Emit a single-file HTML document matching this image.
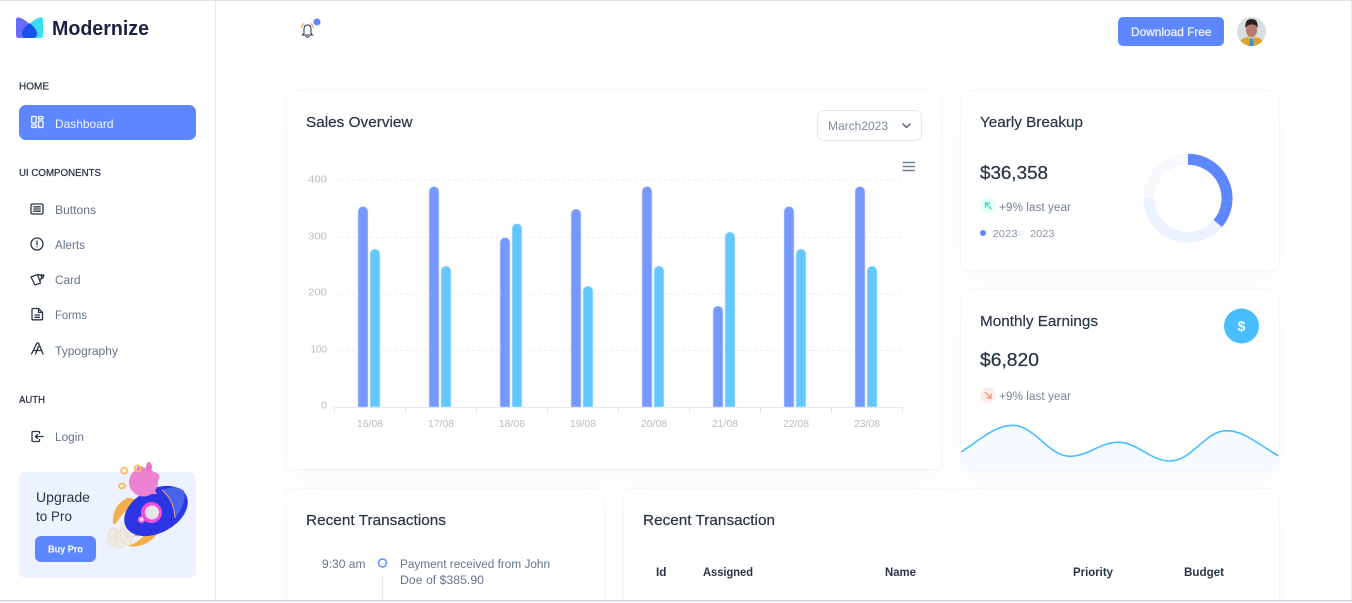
<!DOCTYPE html>
<html><head><meta charset="utf-8"><title>Modernize</title>
<style>
html,body{margin:0;padding:0;width:1352px;height:603px;overflow:hidden;background:#fff}
#w{position:absolute;left:0;top:0;width:1352px;height:603px;overflow:hidden;background:#fff}
.c{position:absolute;background:#fff;border-radius:7px;box-shadow:0 0 2px rgba(145,158,171,.16),0 12px 24px -4px rgba(145,158,171,.08)}
svg{position:absolute;left:0;top:0}
text{font-family:"Liberation Sans",sans-serif}
.h{font-size:15px;fill:#2A3547;stroke:#2A3547;stroke-width:.2px}
.n{font-size:11.5px;fill:#66748C}
.s{font-size:10.5px;fill:#2A3547;stroke:#2A3547;stroke-width:.25px}
.a{font-size:10px;fill:#BABCC6}
.t{font-size:11.500px;font-weight:700;fill:#2A3547}
.i{fill:none;stroke:#2A3547;stroke-width:1.3;stroke-linecap:round;stroke-linejoin:round}
.g{stroke:#ECEEF1;stroke-width:1;stroke-dasharray:3 3}
.b{fill:#7699FF;stroke:#D6E0FF;stroke-width:.6}
.y{fill:#63C8FF;stroke:#D8F0FF;stroke-width:.6}
</style></head><body>
<div id="w">
<div class="c" style="left:287px;top:91px;width:654px;height:378px"></div>
<div class="c" style="left:961px;top:91px;width:318px;height:179px"></div>
<div class="c" style="left:961px;top:290px;width:318px;height:180px"></div>
<div class="c" style="left:287px;top:489px;width:317px;height:130px"></div>
<div class="c" style="left:624px;top:489px;width:655px;height:130px"></div>
<svg width="1352" height="603" viewBox="0 0 1352 603" xmlns="http://www.w3.org/2000/svg">
<!-- frame -->
<rect x="0" y="0" width="1352" height="1" fill="#E4E4E4"/>
<rect x="215" y="1" width="1" height="599" fill="#E8E8EC"/>
<rect x="1351" y="1" width="1" height="599" fill="#EDEDED"/>

<!-- logo -->
<path d="M16 20Q16 17 19 17.500Q28 20 32 29L27 38H19Q16 38 16 35Z" fill="#6B6BFF"/>
<path d="M43 19.500Q43 17 40 17.500Q33 19 28.500 26L33 38H40Q43 38 43 35Z" fill="#3BDDEF"/>
<path d="M29.500 23Q22 29 22 33.500Q22 38 26 38H33Q37 38 37 33.500Q37 29 29.500 23Z" fill="#1A50EC"/>
<text x="52" y="35" font-size="20" font-weight="700" fill="#1B2140" textLength="97" lengthAdjust="spacingAndGlyphs">Modernize</text>

<!-- nav -->
<text class="s" x="19" y="89.500" textLength="30" lengthAdjust="spacingAndGlyphs">HOME</text>
<rect x="19" y="105" width="177" height="35" rx="7" fill="#5D87FF"/>
<g fill="none" stroke="#fff" stroke-width="1.300" stroke-linejoin="round">
<rect x="31.700" y="116.500" width="4.500" height="6.500" rx=".8"/><rect x="31.700" y="125" width="4.500" height="2.500" rx=".8"/>
<rect x="38.500" y="116.500" width="4.500" height="2.500" rx=".8"/><rect x="38.500" y="121" width="4.500" height="6.500" rx=".8"/>
</g>
<text x="55" y="128" font-size="12" fill="#F2F5FF" textLength="58.500" lengthAdjust="spacingAndGlyphs">Dashboard</text>
<text class="s" x="19" y="176" textLength="82" lengthAdjust="spacingAndGlyphs">UI COMPONENTS</text>

<path class="i" d="M32.500 204H41.500Q43 204 43 205.500V212.500Q43 214 41.500 214H32.500Q31 214 31 212.500V205.500Q31 204 32.500 204ZM33.800 206.800H40.200M33.800 209H40.200M33.800 211.200H40.200"/>
<text class="n" x="55" y="214" textLength="41" lengthAdjust="spacingAndGlyphs">Buttons</text>
<circle class="i" cx="37" cy="244" r="6"/><path class="i" d="M37 241V244.500M37 246.800V246.900"/>
<text class="n" x="55" y="249" textLength="30" lengthAdjust="spacingAndGlyphs">Alerts</text>
<path class="i" d="M31 277L37.500 274.500L40.500 283L35 285ZM38.500 274.500L42 276L40.500 280M41.500 274.500L44 275.500L42.500 278.500"/>
<text class="n" x="55" y="284" textLength="25.500" lengthAdjust="spacingAndGlyphs">Card</text>
<path class="i" d="M33 308.500H38.500L42.500 312.500V319Q42.500 319.800 41.500 319.800H33Q32 319.800 32 319V309.500Q32 308.500 33 308.500ZM38.500 308.500V312.500H42.500M35 315H39.500M35 317.300H39.500"/>
<text class="n" x="55" y="319" textLength="32" lengthAdjust="spacingAndGlyphs">Forms</text>
<path class="i" d="M31.500 354L37 343H38.500L43 354M33.500 350.500H41M35.500 354L38.500 346.500"/>
<text class="n" x="55" y="355" textLength="63" lengthAdjust="spacingAndGlyphs">Typography</text>
<text class="s" x="19" y="403" textLength="26" lengthAdjust="spacingAndGlyphs">AUTH</text>
<path class="i" d="M39.500 433.500V432.500Q39.500 431.500 38.500 431.500H33Q32 431.500 32 432.500V440.500Q32 441.500 33 441.500H38.500Q39.500 441.500 39.500 440.500V439.500M43 436.500H35.500M37.500 434.500L35.500 436.500L37.500 438.500"/>
<text class="n" x="55" y="441" textLength="29" lengthAdjust="spacingAndGlyphs">Login</text>

<!-- upgrade -->
<rect x="19" y="472" width="177" height="106" rx="7" fill="#ECF2FF"/>
<text x="36" y="502" font-size="13.500" fill="#2A3547" textLength="54" lengthAdjust="spacingAndGlyphs">Upgrade</text>
<text x="36" y="521" font-size="13.500" fill="#2A3547" textLength="36" lengthAdjust="spacingAndGlyphs">to Pro</text>
<rect x="35" y="536" width="61" height="26" rx="6" fill="#5D87FF"/>
<text x="48" y="552.500" font-size="10.500" font-weight="700" fill="#fff" textLength="35" lengthAdjust="spacingAndGlyphs">Buy Pro</text>
<!-- rocket -->
<g>
<path d="M113 523Q112 506 127 498Q135 497 138 503Q124 510 117 522Q114 526 113 523Z" fill="#F5AE4C"/>
<path d="M128 546Q146 549 159 532L150 529Q140 542 128 546Z" fill="#F5AE4C"/>
<path d="M127 538Q140 535 158 532L147 522L129 520Z" fill="#F29A2E"/>
<g fill="#EFEADF" stroke="#DDD8CC" stroke-width=".5">
<circle cx="112" cy="541" r="5.500"/><circle cx="120" cy="543" r="5"/><circle cx="113" cy="533" r="5"/><circle cx="122" cy="535" r="5.500"/><circle cx="128" cy="541" r="4.500"/><circle cx="125" cy="526" r="5"/><circle cx="131" cy="532" r="5"/><circle cx="129" cy="520" r="4"/>
</g>
<ellipse cx="156" cy="511" rx="34" ry="22" fill="#2C35E4" transform="rotate(-28 156 511)"/>
<path d="M162 490Q176 484 184 491Q187 503 175 518Q173 500 162 490Z" fill="#4A63EE"/>
<path d="M162 490Q174 500 175 518" fill="none" stroke="#F0A84A" stroke-width="1"/>
<circle cx="151.500" cy="512.500" r="10.500" fill="#F14FD9"/><circle cx="152" cy="512.500" r="7" fill="#E8E5E5"/>
<circle cx="141.500" cy="519.500" r="3.800" fill="#F14FD9"/><circle cx="141.500" cy="519.500" r="2" fill="#E8E5E5"/>
<circle cx="143.500" cy="482" r="14.500" fill="#EE82D2"/>
<ellipse cx="153" cy="477" rx="6.500" ry="5" fill="#EE82D2"/>
<ellipse cx="149" cy="467" rx="3" ry="5" fill="#EA74CB"/>
<ellipse cx="140" cy="469" rx="3.500" ry="3" fill="#EA74CB"/>
<path d="M149 494L153 488L157 494Z" fill="#EE82D2"/>
<g fill="none" stroke="#F6BE66" stroke-width="2">
<circle cx="124.300" cy="470.700" r="3"/><circle cx="137.700" cy="468.500" r="3"/><ellipse cx="122" cy="486" rx="3" ry="2.400"/>
</g>
</g>

<!-- header -->
<path d="M304 33.500V29Q304 25 307.500 25Q311 25 311 29V33.500L312.500 35H302.500ZM305.500 36Q307.500 38.500 309.500 36" fill="none" stroke="#24304A" stroke-width="1"/>
<path d="M301.500 28Q302 25 304 23.500M313.500 28Q313 25 311 23.500" fill="none" stroke="#D98A2E" stroke-width=".9"/>
<circle cx="317" cy="22" r="3.500" fill="#5D87FF"/>
<rect x="1118" y="17" width="106" height="29" rx="5" fill="#5D87FF"/>
<text x="1131" y="36" font-size="12" fill="#F4F7FF" stroke="#F4F7FF" stroke-width=".25" textLength="80.500" lengthAdjust="spacingAndGlyphs">Download Free</text>
<circle cx="1251.500" cy="31.500" r="14.500" fill="#D6DEE1"/>
<path d="M1240.500 41Q1243 37.500 1248 37L1251.500 39L1255 37Q1260 37.500 1262.500 41Q1258 46 1251.500 46Q1245 46 1240.500 41Z" fill="#E0A32E"/>
<path d="M1250 38.500H1253L1254 46H1249Z" fill="#3F8FD8"/>
<ellipse cx="1251.500" cy="30" rx="5.500" ry="7.500" fill="#B87A6C"/>
<path d="M1245.500 28Q1244.500 19 1251.500 19Q1258.500 19 1257.500 28Q1255 23.500 1251.500 24.500Q1248 24 1245.500 28Z" fill="#2B2220"/>

<!-- sales -->
<text class="h" x="306" y="127" textLength="106.500" lengthAdjust="spacingAndGlyphs">Sales Overview</text>
<rect x="817.500" y="110.500" width="104" height="30" rx="6.500" fill="#fff" stroke="#E5EAEF"/>
<text x="828" y="130" font-size="11.500" fill="#7C8AA0" textLength="60" lengthAdjust="spacingAndGlyphs">March2023</text>
<path d="M902.500 123.500L906.500 127.500L910.500 123.500" fill="none" stroke="#4F5B72" stroke-width="1.300"/>
<path d="M902.500 162.500H915M902.500 166.500H915M902.500 170.500H915" stroke="#6E8192" stroke-width="1.400"/>
<path class="g" d="M334 180.500H903M334 237.500H903M334 294H903M334 350.500H903"/>
<path d="M334 407.500H903" stroke="#E8E9EC"/>
<path d="M334.500 407V412M405.500 407V412M476.500 407V412M547.500 407V412M618.500 407V412M689.500 407V412M760.500 407V412M831.500 407V412M902.500 407V412" stroke="#E0E0E3"/>
<text class="a" x="308" y="182.500" textLength="19" lengthAdjust="spacingAndGlyphs">400</text>
<text class="a" x="308" y="239.500" textLength="19" lengthAdjust="spacingAndGlyphs">300</text>
<text class="a" x="308" y="295.500" textLength="19" lengthAdjust="spacingAndGlyphs">200</text>
<text class="a" x="310.500" y="352.500" textLength="16.500" lengthAdjust="spacingAndGlyphs">100</text>
<text class="a" x="321" y="408.500" textLength="6" lengthAdjust="spacingAndGlyphs">0</text>
<text class="a" x="357" y="427" textLength="26" lengthAdjust="spacingAndGlyphs">16/08</text>
<text class="a" x="428" y="427" textLength="26" lengthAdjust="spacingAndGlyphs">17/08</text>
<text class="a" x="499" y="427" textLength="26" lengthAdjust="spacingAndGlyphs">18/08</text>
<text class="a" x="570" y="427" textLength="26" lengthAdjust="spacingAndGlyphs">19/08</text>
<text class="a" x="641" y="427" textLength="26" lengthAdjust="spacingAndGlyphs">20/08</text>
<text class="a" x="712" y="427" textLength="26" lengthAdjust="spacingAndGlyphs">21/08</text>
<text class="a" x="783" y="427" textLength="26" lengthAdjust="spacingAndGlyphs">22/08</text>
<text class="a" x="854" y="427" textLength="26" lengthAdjust="spacingAndGlyphs">23/08</text>
<path class="b" d="M358 407V211.500a5 5 0 0 1 10 0V407Z"/><path class="y" d="M370 407V254a5 5 0 0 1 10 0V407Z"/>
<path class="b" d="M429 407V191.500a5 5 0 0 1 10 0V407Z"/><path class="y" d="M441 407V271a5 5 0 0 1 10 0V407Z"/>
<path class="b" d="M500 407V242.500a5 5 0 0 1 10 0V407Z"/><path class="y" d="M512 407V228.500a5 5 0 0 1 10 0V407Z"/>
<path class="b" d="M571 407V214a5 5 0 0 1 10 0V407Z"/><path class="y" d="M583 407V291a5 5 0 0 1 10 0V407Z"/>
<path class="b" d="M642 407V191.500a5 5 0 0 1 10 0V407Z"/><path class="y" d="M654 407V271a5 5 0 0 1 10 0V407Z"/>
<path class="b" d="M713 407V311a5 5 0 0 1 10 0V407Z"/><path class="y" d="M725 407V237a5 5 0 0 1 10 0V407Z"/>
<path class="b" d="M784 407V211.500a5 5 0 0 1 10 0V407Z"/><path class="y" d="M796 407V254a5 5 0 0 1 10 0V407Z"/>
<path class="b" d="M855 407V191.500a5 5 0 0 1 10 0V407Z"/><path class="y" d="M867 407V271a5 5 0 0 1 10 0V407Z"/>

<!-- yearly -->
<text class="h" x="980" y="127" textLength="103" lengthAdjust="spacingAndGlyphs">Yearly Breakup</text>
<text x="980" y="179" font-size="18.500" fill="#2A3547" stroke="#2A3547" stroke-width=".25" textLength="68" lengthAdjust="spacingAndGlyphs">$36,358</text>
<circle cx="988" cy="205.500" r="8" fill="#E6FFFA"/>
<path d="M991.500 209L985.500 203M985.500 207.500V203H990" fill="none" stroke="#13DEB9" stroke-width="1.200"/>
<text x="999" y="211" font-size="11.500" fill="#77839A" textLength="72" lengthAdjust="spacingAndGlyphs">+9% last year</text>
<circle cx="983" cy="233" r="3" fill="#5D87FF"/>
<text x="992.500" y="237" font-size="10.500" fill="#8A94A6" textLength="25" lengthAdjust="spacingAndGlyphs">2023</text>
<circle cx="1020" cy="233" r="3" fill="#ECF2FF"/>
<text x="1030" y="237" font-size="10.500" fill="#8A94A6" textLength="24.500" lengthAdjust="spacingAndGlyphs">2023</text>
<g fill="none" stroke-width="11">
<path d="M1149 198.300A39 39 0 0 1 1188 159.300" stroke="#F9F9FD"/>
<path d="M1217.800 223.500A39 39 0 0 1 1149 198.300" stroke="#ECF2FF"/>
<path d="M1188 159.300A39 39 0 0 1 1217.800 223.500" stroke="#5D87FF"/>
</g>

<!-- monthly -->
<text class="h" x="980" y="326" textLength="118" lengthAdjust="spacingAndGlyphs">Monthly Earnings</text>
<circle cx="1241.500" cy="326" r="17.500" fill="#49BEFF"/>
<text x="1241.500" y="331" font-size="14" font-weight="700" fill="#fff" text-anchor="middle">$</text>
<text x="980" y="366" font-size="18.500" fill="#2A3547" stroke="#2A3547" stroke-width=".25" textLength="59" lengthAdjust="spacingAndGlyphs">$6,820</text>
<circle cx="988" cy="395" r="8" fill="#FDEDE8"/>
<path d="M985 392L991 398M991 393.500V398H986.500" fill="none" stroke="#FA896B" stroke-width="1.200"/>
<text x="999" y="400" font-size="11.500" fill="#77839A" textLength="72" lengthAdjust="spacingAndGlyphs">+9% last year</text>
<path d="M961 452C980 440 995 425.300 1012.700 425.300C1035 425.300 1048 456.300 1070 456.300C1088 456.300 1100 442.300 1118.300 442.300C1138 442.300 1150 461 1170 461C1192 461 1205 430.700 1226.700 430.700C1245 430.700 1260 446 1278.500 455.700V463Q1278.500 470 1272 470H968Q961 470 961 463Z" fill="#F6FBFF"/>
<path d="M961 452C980 440 995 425.300 1012.700 425.300C1035 425.300 1048 456.300 1070 456.300C1088 456.300 1100 442.300 1118.300 442.300C1138 442.300 1150 461 1170 461C1192 461 1205 430.700 1226.700 430.700C1245 430.700 1260 446 1278.500 455.700" fill="none" stroke="#49BEFF" stroke-width="1.600"/>

<!-- recent -->
<text class="h" x="306" y="525" textLength="140" lengthAdjust="spacingAndGlyphs">Recent Transactions</text>
<text class="n" x="322" y="568" textLength="43.500" lengthAdjust="spacingAndGlyphs">9:30 am</text>
<circle cx="382.500" cy="563" r="4" fill="#fff" stroke="#5D87FF" stroke-width="1.400"/>
<path d="M382.500 575V600" stroke="#E5EAEF"/>
<text class="n" x="400" y="568" textLength="150" lengthAdjust="spacingAndGlyphs">Payment received from John</text>
<text class="n" x="400" y="584" textLength="84" lengthAdjust="spacingAndGlyphs">Doe of $385.90</text>
<text class="h" x="643" y="525" textLength="132" lengthAdjust="spacingAndGlyphs">Recent Transaction</text>
<text class="t" x="656" y="576" textLength="10.500" lengthAdjust="spacingAndGlyphs">Id</text>
<text class="t" x="703" y="576" textLength="50" lengthAdjust="spacingAndGlyphs">Assigned</text>
<text class="t" x="885" y="576" textLength="31" lengthAdjust="spacingAndGlyphs">Name</text>
<text class="t" x="1073" y="576" textLength="40" lengthAdjust="spacingAndGlyphs">Priority</text>
<text class="t" x="1184" y="576" textLength="40" lengthAdjust="spacingAndGlyphs">Budget</text>

<!-- bottom strip -->
<rect x="0" y="600" width="1352" height="1" fill="#CFCFD6"/>
<rect x="0" y="601" width="1352" height="2" fill="#F1F1F8"/>
</svg>
</div>
</body></html>
